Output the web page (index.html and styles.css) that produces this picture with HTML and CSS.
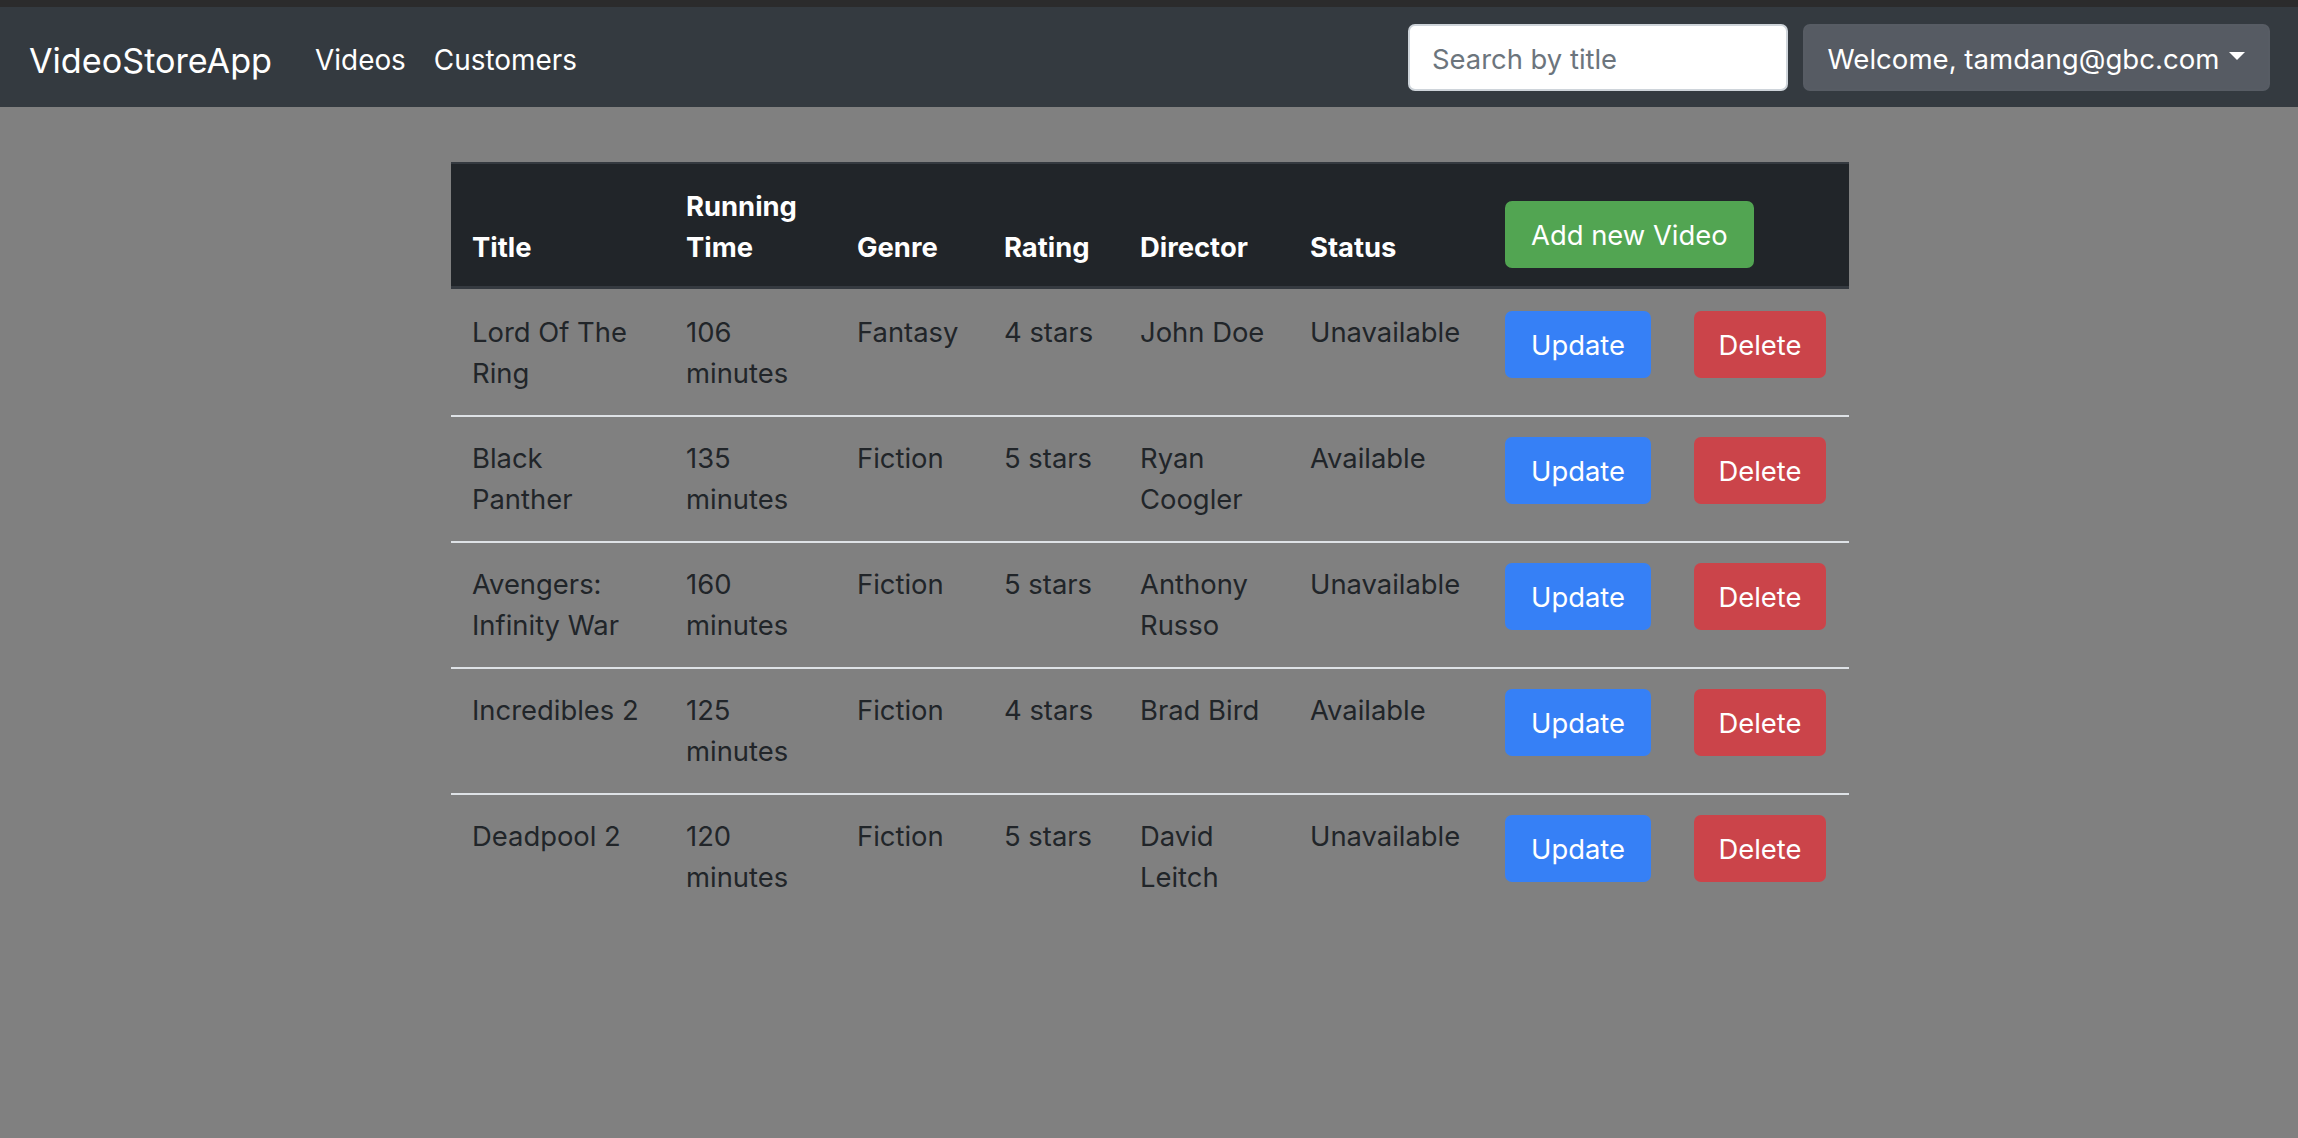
FILE: index.html
```html
<!DOCTYPE html>
<html lang="en">
<head>
<meta charset="utf-8">
<title>VideoStoreApp</title>
<link rel="stylesheet" href="styles.css">
</head>
<body>
<div class="top-strip"></div>
<nav class="navbar">
  <a class="brand" href="#">VideoStoreApp</a>
  <ul class="nav-links">
    <li><a class="nav-link" href="#">Videos</a></li>
    <li><a class="nav-link" href="#">Customers</a></li>
  </ul>
  <div class="nav-right">
    <input class="search" type="text" placeholder="Search by title">
    <button class="welcome">Welcome, tamdang@gbc.com</button>
  </div>
</nav>
<main class="content">
  <table class="videos">
    <colgroup>
      <col class="w-title"><col class="w-time"><col class="w-genre"><col class="w-rating"><col class="w-director"><col class="w-status"><col class="w-update"><col class="w-delete">
    </colgroup>
    <thead>
      <tr>
        <th>Title</th>
        <th>Running Time</th>
        <th>Genre</th>
        <th>Rating</th>
        <th>Director</th>
        <th>Status</th>
        <th colspan="2"><button class="btn btn-success">Add new Video</button></th>
      </tr>
    </thead>
    <tbody>
      <tr>
        <td>Lord Of The Ring</td><td>106 minutes</td><td>Fantasy</td><td>4 stars</td><td>John Doe</td><td>Unavailable</td>
        <td><button class="btn btn-primary">Update</button></td><td><button class="btn btn-danger">Delete</button></td>
      </tr>
      <tr>
        <td>Black Panther</td><td>135 minutes</td><td>Fiction</td><td>5 stars</td><td>Ryan Coogler</td><td>Available</td>
        <td><button class="btn btn-primary">Update</button></td><td><button class="btn btn-danger">Delete</button></td>
      </tr>
      <tr>
        <td>Avengers: Infinity War</td><td>160 minutes</td><td>Fiction</td><td>5 stars</td><td>Anthony Russo</td><td>Unavailable</td>
        <td><button class="btn btn-primary">Update</button></td><td><button class="btn btn-danger">Delete</button></td>
      </tr>
      <tr>
        <td>Incredibles 2</td><td>125 minutes</td><td>Fiction</td><td>4 stars</td><td>Brad Bird</td><td>Available</td>
        <td><button class="btn btn-primary">Update</button></td><td><button class="btn btn-danger">Delete</button></td>
      </tr>
      <tr>
        <td>Deadpool 2</td><td>120 minutes</td><td>Fiction</td><td>5 stars</td><td>David Leitch</td><td>Unavailable</td>
        <td><button class="btn btn-primary">Update</button></td><td><button class="btn btn-danger">Delete</button></td>
      </tr>
    </tbody>
  </table>
</main>
</body>
</html>
```

FILE: styles.css
```css
* { box-sizing: border-box; }
html, body { margin: 0; padding: 0; }
body {
  background: #808080;
  font-family: Inter, "Liberation Sans", sans-serif;
  font-size: 27.4px;
  line-height: 41px;
  color: #212529;
  min-height: 1138px;
}
.top-strip { height: 7px; background: #2b2b2c; }
.navbar {
  height: 100px;
  background: #343a40;
  display: flex;
  align-items: center;
  padding: 0 28px 0 29px;
}
.brand {
  color: #fff;
  text-decoration: none;
  font-size: 34.2px;
  line-height: 50px;
  margin-right: 29px;
  padding-top: 7px;
}
.nav-links { list-style: none; margin: 0; padding: 0; display: flex; }
.nav-link {
  display: block;
  color: #fff;
  text-decoration: none;
  font-size: 27.9px;
  padding: 7px 14px 0;
}
.nav-right { margin-left: auto; display: flex; align-items: center; gap: 15px; padding-top: 1px; }
.search {
  width: 380px;
  height: 67px;
  border: 2px solid #ced4da;
  border-radius: 7px;
  padding: 3px 22px 0;
  font-family: inherit;
  font-size: 27.4px;
  color: #495057;
  background: #fff;
}
.search::placeholder { color: #6c757d; }
.welcome {
  height: 67px;
  width: 467px;
  border: 2px solid #575c64;
  border-radius: 7px;
  background: #565b63;
  color: #fff;
  font-family: inherit;
  font-size: 27.6px;
  padding: 3px 20px 0 20px;
  display: flex;
  align-items: center;
  justify-content: center;
}
.welcome::after {
  content: "";
  display: inline-block;
  margin-left: 10px;
  border-top: 8px solid #fff;
  border-left: 8px solid transparent;
  border-right: 8px solid transparent;
  margin-top: -6px;
}
.content { padding-top: 55px; display: flex; justify-content: center; padding-left: 2px; }
.videos {
  width: 1398px;
  table-layout: fixed;
  border-collapse: collapse;
}
.w-title { width: 214px; }
.w-time { width: 171px; }
.w-genre { width: 147px; }
.w-rating { width: 136px; }
.w-director { width: 170px; }
.w-status { width: 195px; }
.w-update { width: 189px; }
.w-delete { width: 176px; }
.videos th {
  background: #212529;
  color: #fff;
  font-weight: 700;
  text-align: left;
  vertical-align: bottom;
  padding: 22px 21px 18px;
  border-top: 2px solid #353a40;
  border-bottom: 3px solid #353a40;
}
.videos td {
  vertical-align: top;
  padding: 20.5px 21px 21.5px;
  border-top: 2px solid #dee2e6;
}
.videos tbody tr:first-child td { border-top: none; padding-top: 22.5px; }
.videos td .btn { margin-top: -0.5px; }
.btn {
  font-family: inherit;
  font-size: 27.4px;
  line-height: 41px;
  color: #fff;
  border-radius: 7px;
  padding: 12px 24px 10px;
  border: 2px solid transparent;
  cursor: pointer;
}
.btn-success { background: #52a552; border-color: #52a552; }
.btn-primary { background: #3680f6; border-color: #3680f6; }
.btn-danger { background: #cb444a; border-color: #cb444a; padding-left: 22.5px; padding-right: 22.5px; }
```
